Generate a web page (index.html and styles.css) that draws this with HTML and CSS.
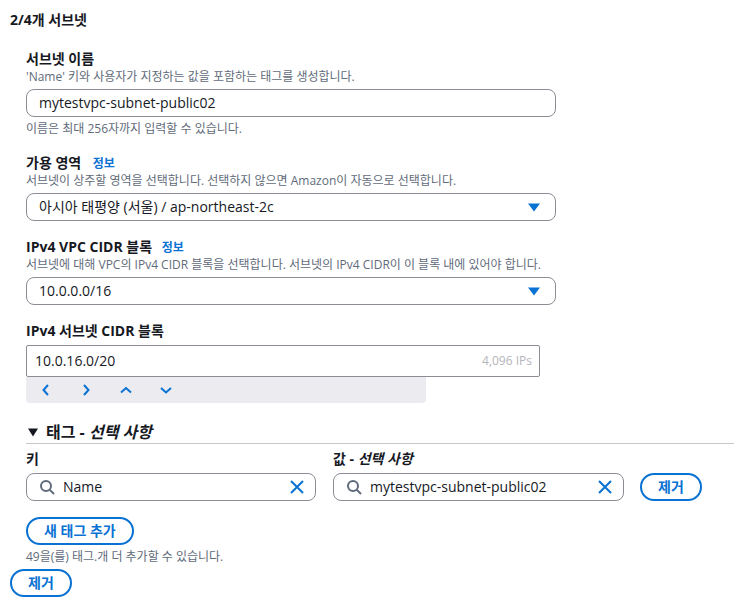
FILE: index.html
```html
<!DOCTYPE html>
<html lang="ko">

<head>
  <meta charset="UTF-8">
  <title>서브넷 설정</title>
  <link rel="stylesheet" href="styles.css">
</head>

<body>
  <h3 class="page-title">2/4개 서브넷</h3>

  <div class="form">
    <div class="field field-name">
      <label class="field-label">서브넷 이름</label>
      <p class="desc">'Name' 키와 사용자가 지정하는 값을 포함하는 태그를 생성합니다.</p>
      <div class="control">mytestvpc-subnet-public02</div>
      <p class="hint">이름은 최대 256자까지 입력할 수 있습니다.</p>
    </div>

    <div class="field field-az">
      <label class="field-label">가용 영역 <a class="info">정보</a></label>
      <p class="desc">서브넷이 상주할 영역을 선택합니다. 선택하지 않으면 Amazon이 자동으로 선택합니다.</p>
      <div class="control select">
        <span>아시아 태평양 (서울) / ap-northeast-2c</span>
        <svg class="caret" width="12" height="9" viewBox="0 0 12 9"><path d="M0 0.5h12L6 8.5z" /></svg>
      </div>
    </div>

    <div class="field field-vpc">
      <label class="field-label">IPv4 VPC CIDR 블록 <a class="info">정보</a></label>
      <p class="desc">서브넷에 대해 VPC의 IPv4 CIDR 블록을 선택합니다. 서브넷의 IPv4 CIDR이 이 블록 내에 있어야 합니다.</p>
      <div class="control select">
        <span>10.0.0.0/16</span>
        <svg class="caret" width="12" height="9" viewBox="0 0 12 9"><path d="M0 0.5h12L6 8.5z" /></svg>
      </div>
    </div>

    <div class="field field-cidr">
      <label class="field-label">IPv4 서브넷 CIDR 블록</label>
      <div class="cidr-input">
        <span>10.0.16.0/20</span>
        <span class="cidr-count">4,096 IPs</span>
      </div>
      <div class="stepper">
        <svg class="step" width="16" height="16" viewBox="0 0 16 16"><path d="M10 3L5.5 8l4.500 5" /></svg>
        <svg class="step" width="16" height="16" viewBox="0 0 16 16"><path d="M6 3l4.500 5L6 13" /></svg>
        <svg class="step" width="16" height="16" viewBox="0 0 16 16"><path d="M3 10.500L8 6l5 4.500" /></svg>
        <svg class="step" width="16" height="16" viewBox="0 0 16 16"><path d="M3 6l5 4.500L13 6" /></svg>
      </div>
    </div>

    <div class="tags">
      <div class="tags-head">
        <svg class="tags-caret" width="12" height="9" viewBox="0 0 12 9"><path d="M1 0.500h10L6 8.500z" /></svg>
        <span>태그 - <em>선택 사항</em></span>
      </div>

      <div class="tag-row">
        <div class="tag-col">
          <div class="tag-label">키</div>
          <div class="control search">
            <svg class="search-icon" width="16" height="16" viewBox="0 0 16 16"><circle cx="7" cy="7" r="5" /><path d="M10.600 10.600L15 15" /></svg>
            <span class="search-text">Name</span>
            <svg class="clear" width="16" height="16" viewBox="0 0 16 16"><path d="M2 2l12 12M14 2L2 14" /></svg>
          </div>
        </div>
        <div class="tag-col">
          <div class="tag-label">값 - <em>선택 사항</em></div>
          <div class="control search">
            <svg class="search-icon" width="16" height="16" viewBox="0 0 16 16"><circle cx="7" cy="7" r="5" /><path d="M10.600 10.600L15 15" /></svg>
            <span class="search-text">mytestvpc-subnet-public02</span>
            <svg class="clear" width="16" height="16" viewBox="0 0 16 16"><path d="M2 2l12 12M14 2L2 14" /></svg>
          </div>
        </div>
        <button class="btn btn-row">제거</button>
      </div>

      <button class="btn btn-add">새 태그 추가</button>
      <p class="hint hint-tags">49을(를) 태그.개 더 추가할 수 있습니다.</p>
    </div>
  </div>

  <button class="btn">제거</button>
</body>

</html>
```

FILE: styles.css
```css
* {
  box-sizing: border-box;
}

body {
  margin: 0;
  padding: 10px 0 0 10px;
  font-family: "Open Sans", "Noto Sans CJK KR", sans-serif;
  font-size: 14px;
  line-height: 20px;
  color: #16191f;
  background-color: #fff;
  overflow: hidden;
}

.page-title {
  margin: 0;
  font-size: 14px;
  line-height: 20px;
  font-weight: 700;
}

.form {
  margin-left: 16px;
  padding-top: 18px;
}

.field-label {
  display: block;
  padding-top: 2px;
  font-weight: 700;
  line-height: 18px;
}

.info {
  margin-left: 8px;
  font-size: 12px;
  line-height: 1;
  color: #0972d3;
}

.field-vpc .info {
  margin-left: 6px;
}

.desc,
.hint {
  margin: 0;
  font-size: 12px;
  line-height: 16px;
  color: #5f6b7a;
}

.desc {
  padding-top: 1px;
  margin-bottom: 4px;
}

.hint {
  margin-top: 4px;
}

.control {
  display: flex;
  align-items: center;
  width: 530px;
  height: 28px;
  padding: 0 12px;
  border: 1px solid #8c8c94;
  border-radius: 8px;
  color: #16191f;
}

.select {
  justify-content: space-between;
  padding-right: 15px;
}

.caret path {
  fill: #0972d3;
}

.field-az {
  margin-top: 15px;
}

.field-vpc {
  margin-top: 15px;
}

.field-cidr {
  margin-top: 15px;
}

.cidr-input {
  display: flex;
  align-items: center;
  justify-content: space-between;
  width: 514px;
  height: 32px;
  margin-top: 5px;
  padding: 0 7px 0 8px;
  border: 1px solid #8c8c94;
  border-radius: 2px;
}

.cidr-count {
  font-size: 12px;
  color: #b4b4bb;
}

.stepper {
  display: flex;
  align-items: center;
  gap: 24px;
  width: 400px;
  height: 26px;
  padding-left: 12px;
  background-color: #ebebf0;
  border-radius: 0 0 4px 4px;
}

.step path {
  fill: none;
  stroke: #0972d3;
  stroke-width: 2;
}

.tags {
  margin-top: 18px;
}

.tags-head {
  display: flex;
  align-items: center;
  gap: 7px;
  height: 23px;
  padding-left: 1px;
  font-size: 16px;
  font-weight: 700;
  border-bottom: 1px solid #c6c6cd;
}

.tags-caret path {
  fill: #16191f;
}

.tag-row {
  display: flex;
  align-items: flex-end;
  margin-top: 4px;
}

.tag-col {
  width: 307px;
}

.tag-col + .tag-col {
  width: 291px;
}

.tag-label {
  padding-top: 2px;
  font-weight: 700;
  line-height: 18px;
  margin-bottom: 5px;
}

.tag-col .control {
  width: 290px;
}

.tag-col + .tag-col .control {
  width: 291px;
}

.search {
  padding: 0 10px 0 12px;
}

.search-icon {
  flex-shrink: 0;
}

.search-icon circle,
.search-icon path {
  fill: none;
  stroke: #5f6b7a;
  stroke-width: 2;
}

.search-text {
  flex: 1;
  margin-left: 8px;
}

.clear path {
  fill: none;
  stroke: #0972d3;
  stroke-width: 2;
}

.btn {
  display: block;
  height: 28px;
  padding: 0 16px 2px;
  border: 2px solid #0972d3;
  border-radius: 20px;
  background: #fff;
  color: #0972d3;
  font-family: inherit;
  font-size: 14px;
  font-weight: 700;
}

.btn-row {
  margin-left: 16px;
}

.btn-add {
  margin-top: 16px;
}

.hint-tags {
  margin-top: 4px;
  margin-bottom: 4px;
}
```
